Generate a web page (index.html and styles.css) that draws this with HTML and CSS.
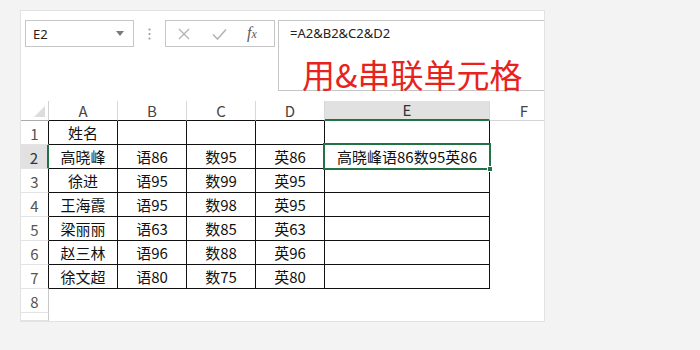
FILE: index.html
```html
<!DOCTYPE html>
<html lang="zh">
<head>
<meta charset="utf-8">
<link rel="stylesheet" href="styles.css">
</head>
<body>
<div class="panel">
  <div class="topbar">
    <div class="namebox"><span>E2</span><span class="caret"></span></div>
    <div class="dots"><svg width="3" height="12" viewBox="0 0 3 12"><circle cx="1.5" cy="1.5" r="1.1" fill="#9a9a9a"/><circle cx="1.5" cy="6" r="1.1" fill="#9a9a9a"/><circle cx="1.5" cy="10.5" r="1.1" fill="#9a9a9a"/></svg></div>
    <div class="tools">
      <svg class="ico" width="12" height="12" viewBox="0 0 12 12"><path d="M1 1 L11 11 M11 1 L1 11" stroke="#b4b4b4" stroke-width="1.4" fill="none"/></svg>
      <svg class="ico" width="15" height="12" viewBox="0 0 15 12"><path d="M1 6.5 L5.5 11 L14 1.5" stroke="#b4b4b4" stroke-width="1.6" fill="none"/></svg>
      <span class="fx">f<small>x</small></span>
    </div>
    <div class="formula">
      <div class="ftext">=A2&amp;B2&amp;C2&amp;D2</div>
      <div class="note">用&amp;串联单元格</div>
    </div>
  </div>
  <div class="sheet">
    <div class="corner"><span class="tri"></span></div>
    <div class="ch">A</div><div class="ch">B</div><div class="ch">C</div><div class="ch">D</div><div class="ch sel">E</div><div class="ch last">F</div>

    <div class="rh">1</div><div class="c">姓名</div><div class="c"></div><div class="c"></div><div class="c"></div><div class="c"></div><div class="f"></div>
    <div class="rh sel">2</div><div class="c">高晓峰</div><div class="c">语86</div><div class="c">数95</div><div class="c">英86</div><div class="c active">高晓峰语86数95英86<span class="selbox"></span><span class="handle"></span></div><div class="f"></div>
    <div class="rh">3</div><div class="c">徐进</div><div class="c">语95</div><div class="c">数99</div><div class="c">英95</div><div class="c"></div><div class="f"></div>
    <div class="rh">4</div><div class="c">王海霞</div><div class="c">语95</div><div class="c">数98</div><div class="c">英95</div><div class="c"></div><div class="f"></div>
    <div class="rh">5</div><div class="c">梁丽丽</div><div class="c">语63</div><div class="c">数85</div><div class="c">英63</div><div class="c"></div><div class="f"></div>
    <div class="rh">6</div><div class="c">赵三林</div><div class="c">语96</div><div class="c">数88</div><div class="c">英96</div><div class="c"></div><div class="f"></div>
    <div class="rh">7</div><div class="c">徐文超</div><div class="c">语80</div><div class="c">数75</div><div class="c">英80</div><div class="c"></div><div class="f"></div>
    <div class="rh plain">8</div><div class="e"></div><div class="e"></div><div class="e"></div><div class="e"></div><div class="e"></div><div class="f"></div>
    <div class="rh plain"></div><div class="e"></div><div class="e"></div><div class="e"></div><div class="e"></div><div class="e"></div><div class="f"></div>
  </div>
</div>
</body>
</html>
```

FILE: styles.css
```css
* { box-sizing: border-box; }
html, body { margin: 0; padding: 0; }
body {
  width: 700px;
  height: 350px;
  background: #f3f3f3;
  font-family: "Noto Sans CJK SC", "Noto Sans", sans-serif;
  overflow: hidden;
}
.panel {
  margin: 10px 0 0 20px;
  width: 525px;
  height: 312px;
  background: #fff;
  border: 1px solid #e2e2e2;
  overflow: hidden;
}
.topbar {
  display: flex;
  align-items: flex-start;
  padding: 9px 0 0 4px;
  height: 90px;
}
.namebox {
  width: 109px;
  height: 27px;
  border: 1px solid #c6c6c6;
  display: flex;
  align-items: center;
  justify-content: space-between;
  padding: 0 7px 0 7px;
  font-family: "Noto Sans", sans-serif;
  font-size: 13px;
  color: #222;
}
.caret {
  width: 0; height: 0;
  border-left: 4px solid transparent;
  border-right: 4px solid transparent;
  border-top: 5px solid #7a7a7a;
  margin-right: 2px;
}
.dots {
  width: 31px;
  height: 27px;
  display: flex;
  align-items: center;
  justify-content: center;
}
.tools {
  width: 110px;
  height: 27px;
  border: 1px solid #c6c6c6;
  display: flex;
  align-items: center;
  padding: 0 0 0 12px;
  gap: 22px;
}
.fx {
  font-family: "Liberation Serif", serif;
  font-style: italic;
  font-size: 16px;
  color: #5a5a5a;
  margin-left: -2px;
  line-height: 16px;
}
.fx small { font-size: 12px; }
.formula {
  margin-left: 3px;
  flex: 1;
  height: 71px;
  border: 1px solid #c6c6c6;
  border-right: none;
  position: relative;
}
.ftext {
  font-family: "Noto Sans", sans-serif;
  font-size: 13px;
  color: #222;
  padding: 3px 0 0 11px;
  line-height: 18px;
}
.note {
  color: #e8231d;
  font-size: 33px;
  line-height: 33px;
  margin: 16px 0 0 23px;
  white-space: nowrap;
}
.sheet {
  display: grid;
  grid-template-columns: 28px 69px 69px 69px 69px 165px 69px;
  grid-template-rows: 20px repeat(8, 24px) 1fr;
  height: 220px;
  font-size: 15px;
  color: #111;
}
.corner, .ch {
  border-right: 1px solid #d8d8d8;
  border-bottom: 1px solid #111;
  display: flex;
  align-items: center;
  justify-content: center;
  color: #444;
  font-size: 15px;
  line-height: 20px;
}
.corner { border-bottom-color: #ababab; border-right-color: #d0d0d0; position: relative; }
.tri {
  position: absolute;
  right: 3px; bottom: 3px;
  width: 0; height: 0;
  border-left: 11px solid transparent;
  border-bottom: 11px solid #dcdcdc;
}
.ch.sel {
  background: #e1e1e1;
  border-bottom: 2px solid #217346;
  color: #333;
}
.ch.last { border-bottom-color: #d5d5d5; }
.rh {
  border-right: 1px solid #111;
  border-bottom: 1px solid #e3e3e3;
  display: flex;
  align-items: center;
  justify-content: center;
  color: #555;
  font-size: 15px;
  padding-top: 2px;
}
.rh.sel { background: #e1e1e1; border-right: 2px solid #217346; color: #333; }
.rh.plain { border-right-color: #c8c8c8; }
.c {
  border-right: 1px solid #111;
  border-bottom: 1px solid #111;
  display: flex;
  align-items: center;
  justify-content: center;
  line-height: 22px;
  white-space: nowrap;
}
.active { position: relative; }
.selbox {
  position: absolute;
  left: -2px; top: -2px; right: -2px; bottom: -2px;
  border: 2px solid #217346;
}
.handle {
  position: absolute;
  right: -4px; bottom: -4px;
  width: 6px; height: 6px;
  background: #217346;
  border: 1px solid #fff;
}
```
